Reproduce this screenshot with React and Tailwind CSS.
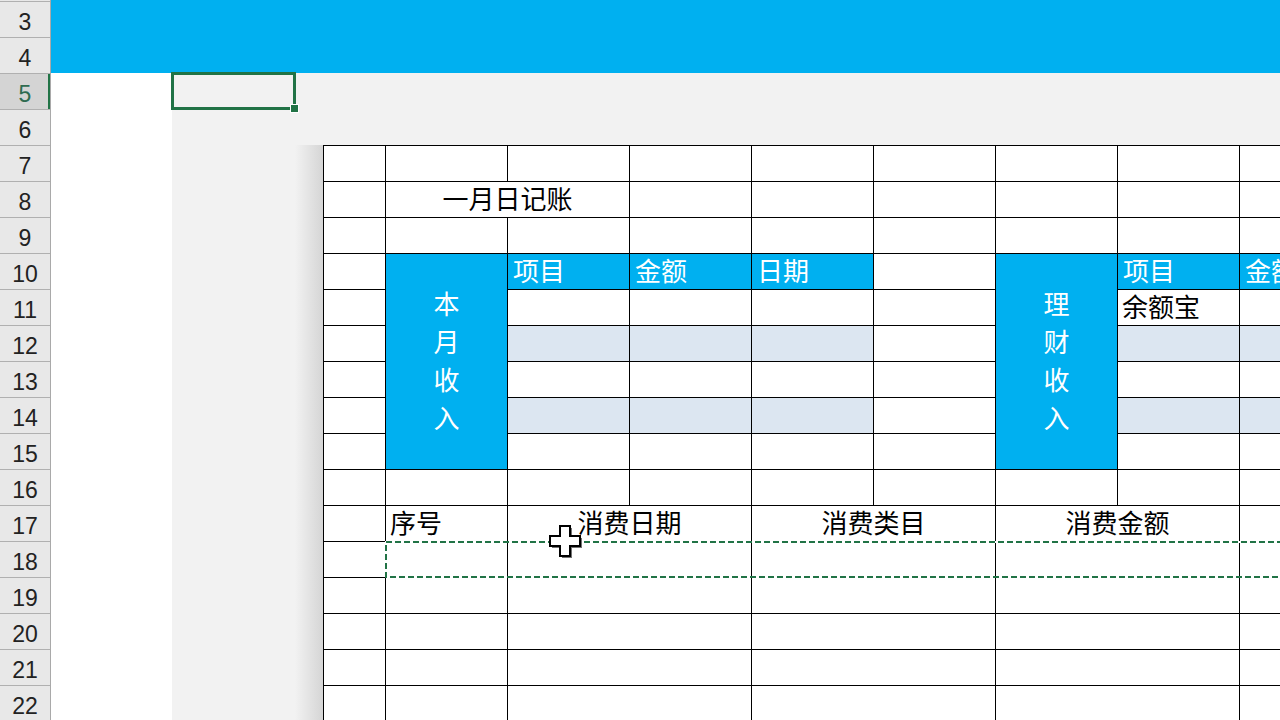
const cell = "border-l border-t border-black flex items-center"
const blue = "bg-[#00b0f0] text-white"
const pale = "bg-[#dce6f1]"

function RowHeaders() {
  const rows = []
  for (let n = 3; n <= 22; n++) rows.push(n)

  return (
    <div className="w-[51px] shrink-0 h-full bg-[#e8e8e8] border-r border-[#a9a9a9] pt-[1px]">
      {rows.map((n) => (
        <div
          key={n}
          className={`h-[36px] border-t border-[#b0b0b0] flex items-center justify-center text-[23px] leading-none pt-[6px] ${
            n === 5
              ? "bg-[#d4d4d4] text-[#2f6b50] shadow-[inset_-2px_0_0_#217346]"
              : "text-[#222222]"
          }`}
        >
          {n}
        </div>
      ))}
    </div>
  )
}

function Vertical({ chars }) {
  return (
    <div className="flex flex-col items-center leading-[38px]">
      {chars.split("").map((c, i) => (
        <span key={i}>{c}</span>
      ))}
    </div>
  )
}

function Sheet() {
  return (
    <div className="grid shrink-0 grid-cols-[62px_repeat(8,122px)] grid-rows-[repeat(16,36px)] text-[26px] leading-none text-black bg-white">

      {/* row 7 */}
      {Array.from({ length: 9 }).map((_, i) => (
        <div key={"r7" + i} className={cell} />
      ))}

      {/* row 8 */}
      <div className={cell} />
      <div className={`${cell} col-span-2 justify-center`}>一月日记账</div>
      {Array.from({ length: 6 }).map((_, i) => (
        <div key={"r8" + i} className={cell} />
      ))}

      {/* row 9 */}
      {Array.from({ length: 9 }).map((_, i) => (
        <div key={"r9" + i} className={cell} />
      ))}

      {/* row 10 */}
      <div className={cell} />
      <div className={`${cell} ${blue} row-span-6 justify-center`}>
        <Vertical chars="本月收入" />
      </div>
      <div className={`${cell} ${blue} pl-[5px]`}>项目</div>
      <div className={`${cell} ${blue} pl-[5px]`}>金额</div>
      <div className={`${cell} ${blue} pl-[5px]`}>日期</div>
      <div className={cell} />
      <div className={`${cell} ${blue} row-span-6 justify-center`}>
        <Vertical chars="理财收入" />
      </div>
      <div className={`${cell} ${blue} pl-[5px]`}>项目</div>
      <div className={`${cell} ${blue} pl-[5px]`}>金额</div>

      {/* rows 11 - 15 */}
      {[0, 1, 2, 3, 4].map((r) => {
        const fill = r % 2 === 1 ? pale : "bg-white"
        return [
          <div key={r + "a"} className={cell} />,
          <div key={r + "c"} className={`${cell} ${fill}`} />,
          <div key={r + "d"} className={`${cell} ${fill}`} />,
          <div key={r + "e"} className={`${cell} ${fill}`} />,
          <div key={r + "f"} className={cell} />,
          <div key={r + "h"} className={`${cell} ${fill} pl-[4px]`}>
            {r === 0 ? "余额宝" : ""}
          </div>,
          <div key={r + "i"} className={`${cell} ${fill}`} />,
        ]
      })}

      {/* row 16 */}
      {Array.from({ length: 9 }).map((_, i) => (
        <div key={"r16" + i} className={cell} />
      ))}

      {/* row 17 */}
      <div className={cell} />
      <div className={`${cell} pl-[4px]`}>序号</div>
      <div className={`${cell} col-span-2 justify-center`}>消费日期</div>
      <div className={`${cell} col-span-2 justify-center`}>消费类目</div>
      <div className={`${cell} col-span-2 justify-center`}>消费金额</div>
      <div className={cell} />

      {/* rows 18 - 22 */}
      {[18, 19, 20, 21, 22].map((r) => [
        <div key={r + "a"} className={cell} />,
        <div key={r + "b"} className={cell} />,
        <div key={r + "cd"} className={`${cell} col-span-2`} />,
        <div key={r + "ef"} className={`${cell} col-span-2`} />,
        <div key={r + "gh"} className={`${cell} col-span-2`} />,
        <div key={r + "i"} className={cell} />,
      ])}
    </div>
  )
}

export default function App() {
  return (
    <div className="relative flex w-[1280px] h-[720px] overflow-hidden bg-white font-['Liberation_Sans','Noto_Sans_CJK_SC',sans-serif]">

      <RowHeaders />

      <div className="flex-1 flex flex-col min-w-0">

        {/* BANNER */}
        <div className="h-[73px] shrink-0 bg-[#00b0f0]" />

        <div className="flex flex-1 min-h-0">

          <div className="w-[121px] shrink-0 bg-white" />

          {/* PAGE AREA */}
          <div className="flex-1 flex bg-[#f2f2f2] pt-[72px] overflow-hidden">
            <div className="w-[123px] shrink-0" />
            <div className="w-[28px] shrink-0 bg-gradient-to-r from-[#f2f2f2] to-[#d5d5d5]" />
            <Sheet />
          </div>

        </div>
      </div>

      {/* ACTIVE CELL */}
      <div className="absolute left-[171px] top-[72px] w-[125px] h-[38px] border-[3px] border-[#217346]" />
      <div className="absolute left-[290px] top-[104px] w-[9px] h-[9px] bg-[#217346] border border-white" />

      {/* COPY MARQUEE */}
      <svg className="absolute left-[384px] top-[540px]" width="896" height="39">
        <rect x="2" y="2" width="1000" height="35" fill="none" stroke="#ffffff" strokeWidth="2" />
        <rect x="2" y="2" width="1000" height="35" fill="none" stroke="#217346" strokeWidth="2" strokeDasharray="6 3" />
      </svg>

      {/* CURSOR */}
      <svg className="absolute left-[549px] top-[524px]" width="38" height="38" viewBox="0 0 38 38">
        <polygon
          points="13,4 23,4 23,14 33,14 33,24 23,24 23,34 13,34 13,24 3,24 3,14 13,14"
          fill="#000"
          opacity="0.55"
        />
        <polygon
          points="11,2 21,2 21,12 31,12 31,22 21,22 21,32 11,32 11,22 1,22 1,12 11,12"
          fill="#fff"
          stroke="#000"
          strokeWidth="2"
        />
      </svg>

    </div>
  )
}
